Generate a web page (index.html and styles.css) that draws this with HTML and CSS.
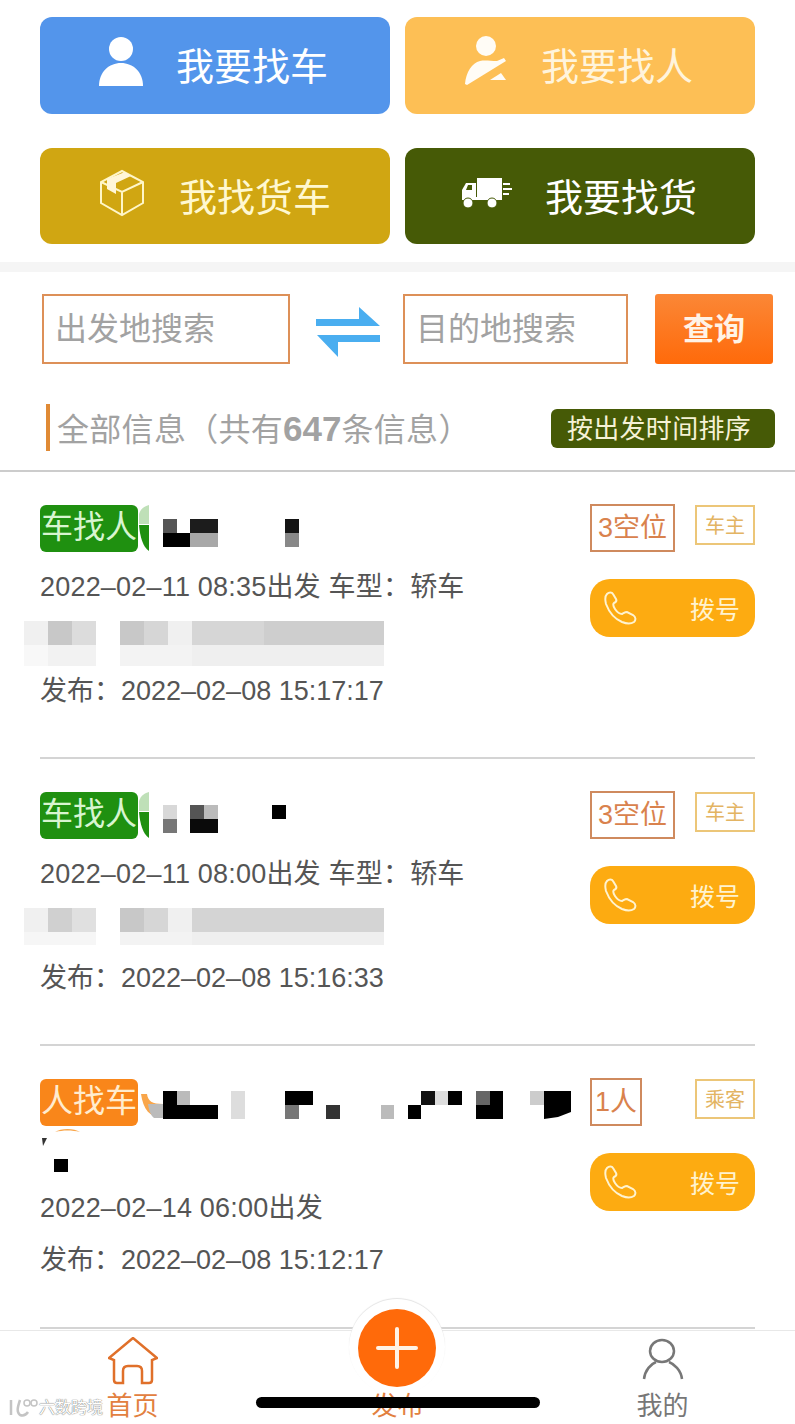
FILE: index.html
```html
<!DOCTYPE html>
<html>
<head>
    <meta charset="utf-8">
    <title>顺风车</title>
    <link rel="stylesheet" href="styles.css">
</head>
<body>
    <div class="page">
        <div class="entry-grid">
            <a class="entry entry-blue">
                <svg class="entry-icon" viewBox="0 0 65 65">
                    <ellipse cx="32" cy="19" rx="12" ry="12" fill="#fff"/>
                    <path d="M10 56 C10 42 20 33 32 33 C44 33 54 42 54 56 Z" fill="#fff"/>
                </svg>
                <span>我要找车</span>
            </a>
            <a class="entry entry-yellow">
                <svg class="entry-icon" viewBox="0 0 65 65">
                    <circle cx="32" cy="16" r="10" fill="#fff" opacity=".95"/>
                    <path d="M11 54 C12 42 18 33 26 31 C31 30 36 31 43 31 L50 28 L52 31 L13 55 Z" fill="#fff" opacity=".95"/>
                    <path d="M36 50 L47 43 L52 50 Z" fill="#fff" opacity=".95"/>
                </svg>
                <span>我要找人</span>
            </a>
            <a class="entry entry-gold">
                <svg class="entry-icon" viewBox="0 0 65 65">
                    <path d="M32 10 L53 21 V42 L32 54 L11 42 V21 Z M11 21 L32 31 L53 21 M32 31 V54" fill="none" stroke="#fff6c8" stroke-width="2"/>
                    <path d="M17 18 L35 11 L41 15 L26 22 V33 L17 28 Z" fill="#fff6d8"/>
                </svg>
                <span>我找货车</span>
            </a>
            <a class="entry entry-olive">
                <svg class="entry-icon" viewBox="0 0 70 45">
                    <rect x="27" y="7" width="25" height="19" fill="#fff"/>
                    <path d="M12 28 V19 L16 12 H26 V28 Z" fill="#fff"/>
                    <path d="M16 19 L18 14 H22 V19 Z" fill="#465a06"/>
                    <rect x="12" y="26" width="40" height="3" fill="#fff"/>
                    <circle cx="18" cy="32" r="5" fill="#fff" stroke="#465a06"/>
                    <circle cx="42" cy="32" r="5" fill="#fff" stroke="#465a06"/>
                    <path d="M53 13 H60 M53 18 H62 M53 23 H59" stroke="#fff" stroke-width="2"/>
                </svg>
                <span>我要找货</span>
            </a>
        </div>

        <div class="band"></div>

        <form class="search">
            <input class="search-from" type="text" placeholder="出发地搜索">
            <svg class="swap" viewBox="0 0 85 65">
                <path d="M11 22 H54 V10 L75 29 H11 Z" fill="#4aaef0"/>
                <path d="M12 38 H75 V45 H33 V60 Z" fill="#4aaef0"/>
            </svg>
            <input class="search-to" type="text" placeholder="目的地搜索">
            <button class="search-btn" type="button">查询</button>
        </form>

        <div class="list-head">
            <h2 class="list-title">全部信息（共有<b>647</b>条信息）</h2>
            <button class="sort-btn" type="button">按出发时间排序</button>
        </div>

        <div class="card">
            <div class="card-main">
                <div class="card-title">
                    <span class="tag tag-green">车找人</span>
                    <svg class="mask" width="170" height="47" viewBox="0 0 170 47">
                        <path d="M1 9 C3 3 7 1 11 0 V19 H1 Z" fill="#bfe0b8"/>
                        <path d="M1 20 H11 V46 C5 42 2 32 1 20 Z" fill="#1f9010"/>
                        <rect x="25" y="14" width="14" height="14" fill="#555"/>
                        <rect x="25" y="28" width="27" height="14" fill="#000"/>
                        <rect x="52" y="14" width="28" height="14" fill="#1c1c1c"/>
                        <rect x="52" y="28" width="28" height="14" fill="#a8a8a8"/>
                        <rect x="147" y="14" width="14" height="14" fill="#141414"/>
                        <rect x="147" y="28" width="14" height="14" fill="#888"/>
                    </svg>
                </div>
                <p class="line line-date">2022–02–11 08:35出发 车型：轿车</p>
                <svg class="blur" viewBox="0 0 360 46">
                    <rect x="0" width="24" height="24" fill="#f0f0f0"/>
                    <rect x="24" width="24" height="24" fill="#c8c8c8"/>
                    <rect x="48" width="24" height="24" fill="#dcdcdc"/>
                    <rect x="96" width="24" height="24" fill="#c8c8c8"/>
                    <rect x="120" width="24" height="24" fill="#d6d6d6"/>
                    <rect x="144" width="24" height="24" fill="#f0f0f0"/>
                    <rect x="168" width="72" height="24" fill="#d6d6d6"/>
                    <rect x="240" width="120" height="24" fill="#cecece"/>
                    <rect x="0" y="24" width="48" height="21" fill="#f8f8f8"/>
                    <rect x="24" y="24" width="48" height="21" fill="#f2f2f2"/>
                    <rect x="96" y="24" width="72" height="21" fill="#f3f3f3"/>
                    <rect x="168" y="24" width="192" height="21" fill="#efefef"/>
                </svg>
                <p class="line">发布：2022–02–08 15:17:17</p>
            </div>
            <div class="card-side">
                <div class="badges">
                    <span class="badge-seat">3空位</span>
                    <span class="badge-role">车主</span>
                </div>
                <a class="call">
                    <svg class="phone" viewBox="0 0 34 34"><path d="M4 3 C6 1 9 1 10 3 L13 8 C14 10 13 11 11 12 C10 13 10 15 12 18 C14 21 17 23 19 23 C21 22 22 21 24 21 L30 24 C33 26 33 29 31 31 C28 33 24 33 19 31 C12 28 6 21 3 13 C2 9 2 5 4 3 Z"/></svg>
                    <span>拨号</span>
                </a>
            </div>
        </div>

        <div class="card">
            <div class="card-main">
                <div class="card-title">
                    <span class="tag tag-green">车找人</span>
                    <svg class="mask" width="170" height="47" viewBox="0 0 170 47">
                        <path d="M1 9 C3 3 7 1 11 0 V19 H1 Z" fill="#bfe0b8"/>
                        <path d="M1 20 H11 V46 C5 42 2 32 1 20 Z" fill="#1f9010"/>
                        <rect x="25" y="13" width="14" height="14" fill="#d8d8d8"/>
                        <rect x="25" y="27" width="14" height="14" fill="#777"/>
                        <rect x="52" y="13" width="14" height="14" fill="#555"/>
                        <rect x="66" y="13" width="14" height="14" fill="#bbb"/>
                        <rect x="52" y="27" width="28" height="14" fill="#0a0a0a"/>
                        <rect x="134" y="13" width="14" height="14" fill="#000"/>
                    </svg>
                </div>
                <p class="line line-date">2022–02–11 08:00出发 车型：轿车</p>
                <svg class="blur" viewBox="0 0 360 46">
                    <rect x="0" width="24" height="24" fill="#f0f0f0"/>
                    <rect x="24" width="24" height="24" fill="#d0d0d0"/>
                    <rect x="48" width="24" height="24" fill="#e0e0e0"/>
                    <rect x="96" width="24" height="24" fill="#c8c8c8"/>
                    <rect x="120" width="24" height="24" fill="#d6d6d6"/>
                    <rect x="144" width="24" height="24" fill="#f0f0f0"/>
                    <rect x="168" width="192" height="24" fill="#d4d4d4"/>
                    <rect x="0" y="24" width="72" height="13" fill="#f6f6f6"/>
                    <rect x="96" y="24" width="72" height="13" fill="#f3f3f3"/>
                    <rect x="168" y="24" width="192" height="13" fill="#efefef"/>
                </svg>
                <p class="line">发布：2022–02–08 15:16:33</p>
            </div>
            <div class="card-side">
                <div class="badges">
                    <span class="badge-seat">3空位</span>
                    <span class="badge-role">车主</span>
                </div>
                <a class="call">
                    <svg class="phone" viewBox="0 0 34 34"><path d="M4 3 C6 1 9 1 10 3 L13 8 C14 10 13 11 11 12 C10 13 10 15 12 18 C14 21 17 23 19 23 C21 22 22 21 24 21 L30 24 C33 26 33 29 31 31 C28 33 24 33 19 31 C12 28 6 21 3 13 C2 9 2 5 4 3 Z"/></svg>
                    <span>拨号</span>
                </a>
            </div>
        </div>

        <div class="card card-last">
            <div class="card-main">
                <div class="card-title card-title-long">
                    <span class="tag tag-orange">人找车</span>
                    <svg class="mask" width="440" height="47" viewBox="0 0 440 47">
                        <path d="M3 15 H9 C10 22 14 25 25 25 V39 C12 39 5 30 3 15 Z" fill="#f9a64a"/>
                        <path d="M10 25 H25 V39 H16 C13 37 11 32 10 25 Z" fill="#bbb"/>
                        <rect x="25" y="12" width="14" height="28" fill="#000"/>
                        <rect x="39" y="12" width="13" height="14" fill="#bbb"/>
                        <rect x="39" y="26" width="41" height="14" fill="#000"/>
                        <rect x="93" y="12" width="14" height="28" fill="#ddd"/>
                        <rect x="147" y="12" width="28" height="14" fill="#000"/>
                        <rect x="147" y="26" width="14" height="14" fill="#777"/>
                        <rect x="188" y="26" width="14" height="14" fill="#333"/>
                        <rect x="243" y="26" width="13" height="14" fill="#bbb"/>
                        <rect x="270" y="26" width="13" height="14" fill="#000"/>
                        <rect x="283" y="12" width="14" height="14" fill="#111"/>
                        <rect x="297" y="12" width="13" height="14" fill="#ddd"/>
                        <rect x="310" y="12" width="14" height="14" fill="#000"/>
                        <rect x="338" y="12" width="14" height="14" fill="#666"/>
                        <rect x="352" y="12" width="13" height="14" fill="#000"/>
                        <rect x="338" y="26" width="27" height="14" fill="#000"/>
                        <rect x="392" y="12" width="14" height="14" fill="#ccc"/>
                        <path d="M406 12 H433 V33 L420 38 L406 40 Z" fill="#000"/>
                    </svg>
                    <svg class="mask-below" width="60" height="48" viewBox="0 0 60 48">
                        <path d="M15 6 C21 2 34 2 40 6 C32 4 23 4 15 6 Z" fill="#f9a64a"/>
                        <path d="M2 12 L7 12 L3 20 Z" fill="#333"/>
                        <rect x="14" y="33" width="14" height="13" fill="#000"/>
                    </svg>
                </div>
                <p class="line line-date">2022–02–14 06:00出发</p>
                <p class="line">发布：2022–02–08 15:12:17</p>
            </div>
            <div class="card-side">
                <div class="badges">
                    <span class="badge-seat badge-narrow">1人</span>
                    <span class="badge-role">乘客</span>
                </div>
                <a class="call">
                    <svg class="phone" viewBox="0 0 34 34"><path d="M4 3 C6 1 9 1 10 3 L13 8 C14 10 13 11 11 12 C10 13 10 15 12 18 C14 21 17 23 19 23 C21 22 22 21 24 21 L30 24 C33 26 33 29 31 31 C28 33 24 33 19 31 C12 28 6 21 3 13 C2 9 2 5 4 3 Z"/></svg>
                    <span>拨号</span>
                </a>
            </div>
        </div>

        <nav class="tabbar">
            <a class="tab tab-on">
                <svg class="tab-icon" viewBox="0 0 50 48">
                    <path d="M25 1 L1 21 L6 23 V43 Q6 46 9 46 H15 V34 Q15 29 20 29 H29 Q34 29 34 34 V46 H41 Q44 46 44 43 V23 L49 21 Z"/>
                </svg>
                <span>首页</span>
            </a>
            <a class="tab tab-on tab-add">
                <span class="add-btn"><i class="add-h"></i><i class="add-v"></i></span>
                <span>发布</span>
            </a>
            <a class="tab">
                <svg class="tab-icon" viewBox="0 0 50 48">
                    <ellipse cx="24" cy="14" rx="12" ry="11"/>
                    <path d="M6 42 C7 33 13 27 18 25 M44 42 C43 33 36 27 31 25"/>
                </svg>
                <span>我的</span>
            </a>
        </nav>

        <div class="home-bar"></div>

        <div class="watermark">
            <svg width="30" height="20" viewBox="0 0 30 20">
                <path d="M3 2 V17 M12 2 C10 8 8 14 12 17 C15 18 18 17 20 14" fill="none" stroke="#c4c4c4" stroke-width="2.5"/>
                <circle cx="19" cy="5" r="3" fill="none" stroke="#c4c4c4" stroke-width="1.5"/>
                <circle cx="26" cy="5" r="3" fill="none" stroke="#c4c4c4" stroke-width="1.5"/>
            </svg>
            <span>六数跨境</span>
        </div>
    </div>
</body>
</html>
```

FILE: styles.css
```css
* {
    box-sizing: border-box;
}

html, body {
    margin: 0;
    padding: 0;
}

body {
    background: #fff;
    font-family: "Liberation Sans", "Noto Sans CJK SC", sans-serif;
    color: #555;
}

p, h2 {
    margin: 0;
}

.page {
    position: relative;
    width: 795px;
    height: 1424px;
    overflow: hidden;
}

/* top entries */
.entry-grid {
    display: grid;
    grid-template-columns: 350px 350px;
    grid-template-rows: 97px 96px;
    column-gap: 15px;
    row-gap: 34px;
    padding: 17px 40px 18px;
}

.entry {
    display: flex;
    align-items: center;
    border-radius: 12px;
    color: #fff;
    font-size: 38px;
}

.entry span {
    padding-bottom: 4px;
}

.entry-icon {
    width: 65px;
    height: 65px;
    margin: 0 22px 6px 49px;
}

.entry-blue { background: #5395eb; }
.entry-yellow { background: #fdbf55; color: #fff4dc; }
.entry-gold { background: #d0a612; color: #fff8d0; }
.entry-gold .entry-icon { margin-left: 50px; margin-right: 24px; }
.entry-olive { background: #465a06; }
.entry-olive .entry-icon { width: 70px; height: 45px; margin-left: 45px; margin-right: 25px; }

.band {
    height: 10px;
    background: #f5f5f5;
}

/* search */
.search {
    display: flex;
    align-items: center;
    padding: 22px 22px 0 42px;
}

.search input {
    height: 70px;
    padding: 0 0 0 11px;
    border: 2px solid #dd9058;
    border-radius: 0;
    outline: none;
    font-family: inherit;
    font-size: 32px;
    color: #555;
}

.search input::placeholder {
    color: #a2a2a2;
}

.search-from { width: 248px; }
.search-to { width: 225px; }

.swap {
    width: 85px;
    height: 65px;
    margin: 0 13px 0 15px;
}

.search-btn {
    width: 118px;
    height: 70px;
    margin-left: 27px;
    padding: 0 0 6px;
    border: none;
    border-radius: 3px;
    background: linear-gradient(to bottom, #fb8736, #ff6a0a);
    color: #fff3e6;
    font-family: inherit;
    font-size: 31px;
    font-weight: bold;
}

/* list head */
.list-head {
    display: flex;
    align-items: center;
    justify-content: space-between;
    margin-top: 40px;
    padding: 0 20px 19px 46px;
    border-bottom: 2px solid #ccc;
}

.list-title {
    height: 47px;
    padding-left: 7px;
    border-left: 4px solid #e08a35;
    font-size: 32px;
    font-weight: normal;
    letter-spacing: .3px;
    line-height: 49px;
    color: #a2a2a2;
}

.list-title b {
    font-size: 35px;
    letter-spacing: 0;
}

.sort-btn {
    width: 224px;
    height: 39px;
    margin-top: 2px;
    padding: 0 8px 0 0;
    border: none;
    border-radius: 6px;
    background: #465a06;
    color: #f6f2d6;
    font-family: inherit;
    font-size: 26px;
    letter-spacing: .3px;
    line-height: 41px;
}

/* cards */
.card {
    display: flex;
    justify-content: space-between;
    height: 287px;
    margin: 0 40px;
    padding-top: 33px;
    border-bottom: 2px solid #d4d4d4;
}

.card-last {
    height: 283px;
}

.card-main {
    flex: 1;
    min-width: 0;
}

.card-title {
    display: flex;
    height: 56px;
}

.card-title-long {
    flex-wrap: wrap;
    align-content: flex-start;
    height: 103px;
}

.tag {
    width: 98px;
    height: 47px;
    border-radius: 6px;
    font-size: 32px;
    line-height: 44px;
    text-align: center;
    white-space: nowrap;
}

.tag-green {
    background: #1f9010;
    color: #d8f5d0;
}

.tag-orange {
    background: #f9861a;
    color: #ffeccf;
}

.mask, .mask-below {
    display: block;
}

.line {
    height: 52px;
    font-size: 27px;
    line-height: 52px;
    white-space: nowrap;
}

.line-date {
    letter-spacing: .2px;
}

.blur {
    display: block;
    width: 360px;
    height: 46px;
    margin: 8px 0 -2px -16px;
}

.card-side {
    flex-shrink: 0;
    width: 165px;
}

.badges {
    display: flex;
    align-items: flex-start;
    justify-content: space-between;
    height: 75px;
    margin-top: -1px;
}

.badge-seat {
    height: 48px;
    padding: 0 6px;
    border: 2px solid #cf8a5e;
    color: #d9824d;
    font-size: 27px;
    line-height: 44px;
}

.badge-narrow {
    padding: 0 3px;
}

.badge-role {
    width: 60px;
    height: 40px;
    margin-top: 1px;
    border: 2px solid #ecc678;
    color: #e3b463;
    font-size: 20px;
    line-height: 38px;
    text-align: center;
}

.call {
    display: flex;
    align-items: center;
    justify-content: space-between;
    height: 58px;
    padding: 0 15px 0 13px;
    border-radius: 20px;
    background: #fdab11;
    color: #fff3cf;
    font-size: 25px;
}

.phone {
    width: 34px;
    height: 34px;
    fill: none;
    stroke: #fff3cf;
    stroke-width: 2;
}

/* bottom tabs */
.tabbar {
    position: absolute;
    left: 0;
    right: 0;
    bottom: 0;
    display: grid;
    grid-template-columns: repeat(3, 1fr);
    height: 94px;
    background: #fff;
    border-top: 1px solid #e8e8e8;
}

.tab {
    display: flex;
    flex-direction: column;
    align-items: center;
    justify-content: flex-end;
    color: #777;
    font-size: 26px;
    line-height: 36px;
}

.tab-on {
    color: #e2803f;
}

.tab-icon {
    width: 50px;
    height: 48px;
    margin-bottom: 3px;
    fill: none;
    stroke: #777;
    stroke-width: 2.5;
}

.tab-on .tab-icon {
    stroke: #e0702a;
}

.tab-add {
    position: relative;
}

.tab-add::before {
    content: "";
    position: absolute;
    left: 84px;
    top: -32px;
    width: 96px;
    height: 96px;
    border-radius: 50%;
    background: #fff;
    box-shadow: 0 -1px 1px #e4e4e4;
}

.add-btn {
    position: absolute;
    left: 93px;
    top: -22px;
    width: 78px;
    height: 78px;
    border-radius: 50%;
    background: #ff6a0a;
}

.tab-add > span:last-child {
    position: relative;
}

.add-h, .add-v {
    position: absolute;
    background: #fff3e6;
    border-radius: 2px;
}

.add-h {
    left: 18px;
    top: 37px;
    width: 42px;
    height: 4px;
}

.add-v {
    left: 37px;
    top: 18px;
    width: 4px;
    height: 42px;
}

.home-bar {
    position: absolute;
    left: 256px;
    top: 1397px;
    width: 284px;
    height: 11px;
    border-radius: 6px;
    background: #000;
}

.watermark {
    position: absolute;
    left: 8px;
    top: 1398px;
    display: flex;
    align-items: center;
    gap: 1px;
    color: #fff;
    font-size: 16px;
    line-height: 20px;
    text-shadow: 0 0 1px #777, 0 0 1px #777;
}
```
